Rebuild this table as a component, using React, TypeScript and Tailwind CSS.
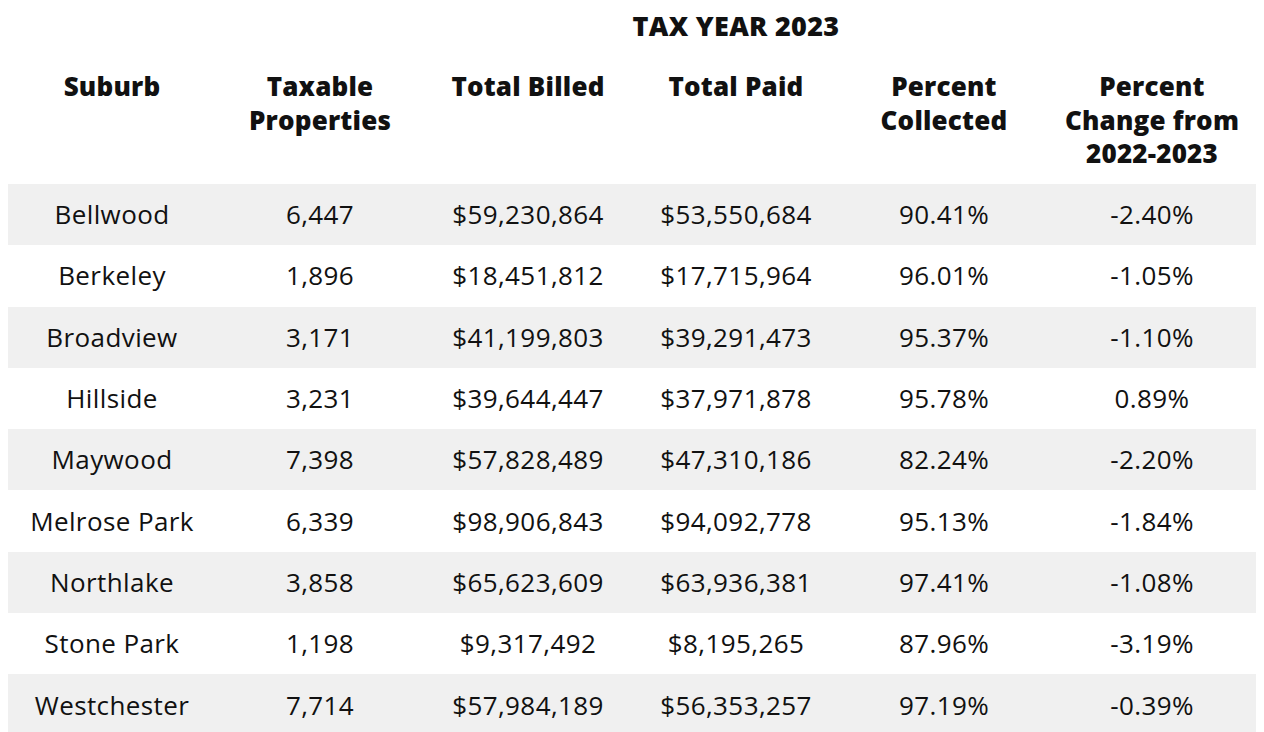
const rows = [
  ["Bellwood", "6,447", "$59,230,864", "$53,550,684", "90.41%", "-2.40%"],
  ["Berkeley", "1,896", "$18,451,812", "$17,715,964", "96.01%", "-1.05%"],
  ["Broadview", "3,171", "$41,199,803", "$39,291,473", "95.37%", "-1.10%"],
  ["Hillside", "3,231", "$39,644,447", "$37,971,878", "95.78%", "0.89%"],
  ["Maywood", "7,398", "$57,828,489", "$47,310,186", "82.24%", "-2.20%"],
  ["Melrose Park", "6,339", "$98,906,843", "$94,092,778", "95.13%", "-1.84%"],
  ["Northlake", "3,858", "$65,623,609", "$63,936,381", "97.41%", "-1.08%"],
  ["Stone Park", "1,198", "$9,317,492", "$8,195,265", "87.96%", "-3.19%"],
  ["Westchester", "7,714", "$57,984,189", "$56,353,257", "97.19%", "-0.39%"],
];

const headers = [
  ["Suburb"],
  ["Taxable", "Properties"],
  ["Total Billed"],
  ["Total Paid"],
  ["Percent", "Collected"],
  ["Percent", "Change from", "2022-2023"],
];

export default function App() {
  return (
    <div className="w-[1264px] h-[732px] bg-white overflow-hidden px-2 text-[#111] font-['Open_Sans','Liberation_Sans',sans-serif]">
      <table className="w-full table-fixed border-collapse">
        <thead>
          <tr className="h-[52px]">
            <th></th>
            <th colSpan={5} className="text-[27px] font-extrabold text-center align-middle tracking-[0.3px]">
              TAX YEAR 2023
            </th>
          </tr>
          <tr className="h-[132px]">
            {headers.map((h, i) => (
              <th key={i} className="align-top pt-[18px] text-[26px] leading-[33.5px] font-extrabold text-center tracking-[0.2px]">
                {h.map((line) => (
                  <div key={line}>{line}</div>
                ))}
              </th>
            ))}
          </tr>
        </thead>
        <tbody>
          {rows.map((r, i) => (
            <tr key={r[0]} className={`h-[61.3px] ${i % 2 === 0 ? "bg-[#f0f0f0]" : "bg-white"}`}>
              {r.map((c, j) => (
                <td key={j} className="text-center align-middle text-[26px] tracking-[0.4px]">
                  {c}
                </td>
              ))}
            </tr>
          ))}
        </tbody>
      </table>
    </div>
  );
}
